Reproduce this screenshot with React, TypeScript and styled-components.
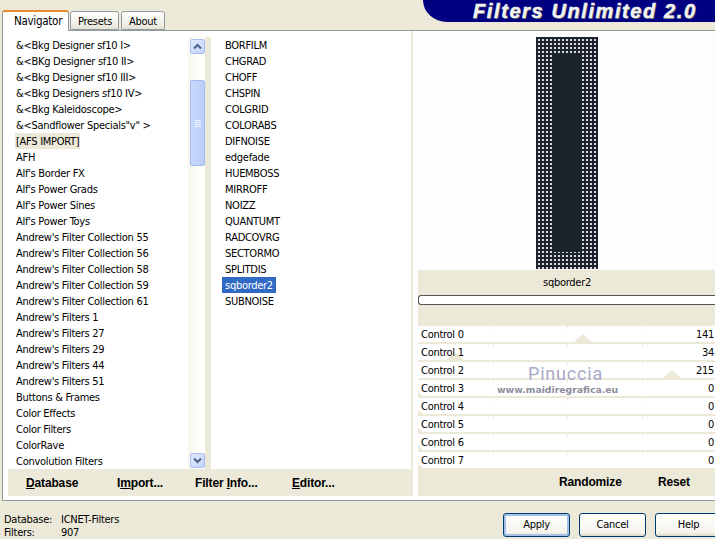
import styled, { createGlobalStyle } from 'styled-components'

const navigatorItems = [
    '&<Bkg Designer sf10 I>', '&<BKg Designer sf10 II>', '&<Bkg Designer sf10 III>', '&<Bkg Designers sf10 IV>',
    '&<Bkg Kaleidoscope>', '&<Sandflower Specials"v" >', '[AFS IMPORT]', 'AFH', "Alf's Border FX", "Alf's Power Grads",
    "Alf's Power Sines", "Alf's Power Toys", "Andrew's Filter Collection 55", "Andrew's Filter Collection 56",
    "Andrew's Filter Collection 58", "Andrew's Filter Collection 59", "Andrew's Filter Collection 61", "Andrew's Filters 1",
    "Andrew's Filters 27", "Andrew's Filters 29", "Andrew's Filters 44", "Andrew's Filters 51", 'Buttons & Frames',
    'Color Effects', 'Color Filters', 'ColorRave', 'Convolution Filters',
]

const filterItems = [
    'BORFILM', 'CHGRAD', 'CHOFF', 'CHSPIN', 'COLGRID', 'COLORABS', 'DIFNOISE', 'edgefade', 'HUEMBOSS', 'MIRROFF',
    'NOIZZ', 'QUANTUMT', 'RADCOVRG', 'SECTORMO', 'SPLITDIS', 'sqborder2', 'SUBNOISE',
]

const controlValues = [141, 34, 215, 0, 0, 0, 0, 0]

const GlobalStyle = createGlobalStyle`
    html, body {
        margin: 0;
        padding: 0;
        background: #ece9d8;
    }
    * {
        box-sizing: border-box;
    }
`

const Window = styled.div`
    width: 715px;
    height: 539px;
    overflow: hidden;
    display: flex;
    flex-direction: column;
    background: #ece9d8;
    color: #000;
    font-family: "DejaVu Sans Condensed", Roboto, sans-serif;
    font-size: 11px;
    letter-spacing: -0.28px;
`

const TopRow = styled.div`
    height: 30px;
    display: flex;
    justify-content: space-between;
    align-items: flex-start;
    padding-left: 2px;
`

const Tabs = styled.div`
    height: 31px;
    display: flex;
    align-items: flex-end;
    position: relative;
    z-index: 1;
`

const Tab = styled.div<{ $active?: boolean; $width: number }>`
    width: ${p => p.$width}px;
    height: ${p => (p.$active ? 21 : 19)}px;
    margin-right: ${p => (p.$active ? 1 : 2)}px;
    margin-bottom: ${p => (p.$active ? 0 : 1)}px;
    padding-left: ${p => (p.$active ? 11 : 7)}px;
    line-height: ${p => (p.$active ? 18 : 20)}px;
    font-size: ${p => (p.$active ? 11.5 : 11)}px;
    border: 1px solid #919b9c;
    border-bottom: ${p => (p.$active ? 'none' : '1px solid #919b9c')};
    border-top: ${p => (p.$active ? '2px solid #e68b2c' : '1px solid #919b9c')};
    border-radius: 3px 3px 0 0;
    background: ${p => (p.$active ? '#fff' : 'linear-gradient(#fff, #f0efe6 70%, #e6e3d4)')};
`

const Logo = styled.div`
    width: 292px;
    height: 22px;
    padding-left: 50px;
    background: #000080;
    border-bottom-left-radius: 24px 22px;
    color: #f2f2f2;
    font-family: "Liberation Sans", Arial, sans-serif;
    font-size: 20px;
    line-height: 22px;
    font-weight: 700;
    font-style: italic;
    letter-spacing: 1.6px;
    white-space: nowrap;
    -webkit-text-stroke: 0.5px #f2f2f2;
    text-shadow: 1px 1px 0 #555;
`

const Panel = styled.div`
    height: 471px;
    margin-left: 2px;
    margin-right: -2px;
    padding: 0 0 4px 5px;
    display: flex;
    gap: 5px;
    background: #fff;
    border: 1px solid #919b9c;
`

const LeftPane = styled.div`
    width: 405px;
    display: flex;
    flex-direction: column;
`

const Lists = styled.div`
    flex: 1;
    display: flex;
    padding-top: 6px;
    border-right: 2px solid #ece9d8;
`

const List = styled.div<{ $width: number; $indent: number }>`
    width: ${p => p.$width}px;
    padding-left: ${p => p.$indent}px;
    overflow: hidden;
`

const Item = styled.div<{ $state?: 'current' | 'selected' }>`
    width: ${p => (p.$state ? 'fit-content' : 'auto')};
    height: 16px;
    padding: 0 ${p => (p.$state === 'selected' ? 3 : 1)}px;
    margin-left: ${p => (p.$state === 'selected' ? 0 : 2)}px;
    line-height: 17px;
    white-space: nowrap;
    background: ${p => (p.$state === 'current' ? '#ece9d8' : p.$state === 'selected' ? '#316ac5' : 'transparent')};
    color: ${p => (p.$state === 'selected' ? '#fff' : '#000')};
`

const Scrollbar = styled.div`
    width: 17px;
    padding: 2px 0 1px 2px;
    display: flex;
    flex-direction: column;
    align-items: stretch;
    background: linear-gradient(90deg, #f6f5ee, #fdfdfb 60%, #fff);
`

const ScrollButton = styled.div`
    height: 15px;
    display: flex;
    align-items: center;
    justify-content: center;
    background: linear-gradient(135deg, #e1eafe, #c3d3fd);
    border: 1px solid #a9bdf0;
    border-radius: 2px;
`

const ScrollThumb = styled.div`
    height: 86px;
    margin-top: 26px;
    margin-bottom: auto;
    display: flex;
    flex-direction: column;
    align-items: center;
    justify-content: center;
    gap: 1px;
    background: linear-gradient(90deg, #c9d8fc, #bccffb);
    border: 1px solid #a3b9ee;
    border-radius: 2px;
`

const Grip = styled.span`
    width: 6px;
    height: 1px;
    background: #eef3fe;
`

const Divider = styled.div`
    width: 6px;
    margin: 0 1px 0 0;
    background: #ece9d8;
`

const ActionBar = styled.div<{ $indent: number }>`
    height: 28px;
    display: flex;
    align-items: center;
    padding-left: ${p => p.$indent}px;
    background: #ece9d8;
    font-family: "Liberation Sans", Arial, sans-serif;
    font-size: 12px;
    font-weight: 700;
    letter-spacing: -0.15px;
`

const Action = styled.div<{ $width: number }>`
    width: ${p => p.$width}px;
    white-space: nowrap;

    u {
        text-decoration: underline;
    }
`

const RightPane = styled.div`
    flex: 1;
    display: flex;
    flex-direction: column;
    min-width: 0;
`

const Preview = styled.div`
    height: 239px;
    padding: 6px 0 1px;
    display: flex;
    justify-content: center;
    background: #fdfdff;
`

const PreviewFrame = styled.div`
    width: 62px;
    padding: 16px 17px 17px;
    background-color: #d9dbe0;
    background-image: linear-gradient(#1c232d 50%, transparent 50%), linear-gradient(90deg, #1c232d 50%, transparent 50%);
    background-size: 4px 4px;
`

const PreviewCore = styled.div`
    height: 100%;
    background: #1a222c;
`

const Caption = styled.div`
    height: 25px;
    text-align: center;
    line-height: 25px;
    background: #ece9d8;
`

const Progress = styled.div`
    height: 10px;
    background: #fff;
    border: 1px solid #555;
    border-right: none;
    border-radius: 3px 0 0 3px;
`

const ProgressGap = styled.div`
    height: 21px;
    background: #ece9d8;
`

const Controls = styled.div`
    position: relative;
    display: flex;
    flex-direction: column;
    gap: 2px;
    background: #ece9d8;
`

const ControlRow = styled.div`
    position: relative;
    height: 16px;
    overflow: hidden;
    padding: 0 2px 0 3px;
    display: flex;
    justify-content: space-between;
    line-height: 17px;
    background:
        linear-gradient(#ecebe2, #ecebe2) 75px 0 / 1px 3px no-repeat,
        linear-gradient(#ecebe2, #ecebe2) 149px 0 / 1px 3px no-repeat,
        linear-gradient(#ecebe2, #ecebe2) 224px 0 / 1px 3px no-repeat,
        #fff;
`

const ControlText = styled.span`
    position: relative;
`

const Thumb = styled.span`
    position: absolute;
    bottom: 0;
    width: 0;
    height: 0;
    border-left: 9px solid transparent;
    border-right: 9px solid transparent;
    border-bottom: 8px solid #ece9d8;
`

const Watermark = styled.div`
    position: absolute;
    left: 79px;
    top: 39px;
    width: 121px;
    text-align: center;
    pointer-events: none;
    color: #8d8d9b;
`

const WatermarkName = styled.div`
    padding-left: 16px;
    font-family: Roboto, sans-serif;
    font-size: 18px;
    line-height: 18px;
    letter-spacing: 0.8px;
    color: #a9a9c9;
`

const WatermarkUrl = styled.div`
    margin-top: 2px;
    font-family: "DejaVu Sans", sans-serif;
    font-size: 9.3px;
    font-weight: 700;
    line-height: 10px;
    letter-spacing: 0;
    white-space: nowrap;
`

const Footer = styled.div`
    flex: 1;
    display: flex;
    justify-content: space-between;
    align-items: flex-start;
`

const Status = styled.div`
    display: grid;
    grid-template-columns: 57px auto;
    grid-auto-rows: 13px;
    padding: 12px 0 0 4px;
    line-height: 13px;
`

const FooterButtons = styled.div`
    display: flex;
    gap: 9px;
    padding-top: 12px;
    margin-right: -7px;
`

const DialogButton = styled.div<{ $default?: boolean }>`
    width: 67px;
    height: 24px;
    text-align: center;
    line-height: 22px;
    border: 1px solid #003c74;
    border-radius: 3px;
    background: linear-gradient(#fff, #f4f3ec 85%, #dcd8c8);
    box-shadow: ${p => (p.$default ? 'inset 0 0 0 2px #a5bfe8' : 'none')};
`

const Chevron = ({ up }: { up?: boolean }) => (
    <svg width="9" height="7" viewBox="0 0 9 7">
        <path
            d={up ? 'M1 5.5 L4.5 2 L8 5.5' : 'M1 1.5 L4.5 5 L8 1.5'}
            fill="none"
            stroke="#4d6185"
            strokeWidth="2"
        />
    </svg>
)

export default function App() {
    return (
        <Window>
            <GlobalStyle />
            <TopRow>
                <Tabs>
                    <Tab $active $width={67}>Navigator</Tab>
                    <Tab $width={49}>Presets</Tab>
                    <Tab $width={44}>About</Tab>
                </Tabs>
                <Logo>Filters Unlimited 2.0</Logo>
            </TopRow>
            <Panel>
                <LeftPane>
                    <Lists>
                        <List $width={180} $indent={5}>
                            {navigatorItems.map(name => (
                                <Item key={name} $state={name === '[AFS IMPORT]' ? 'current' : undefined}>{name}</Item>
                            ))}
                        </List>
                        <Scrollbar>
                            <ScrollButton><Chevron up /></ScrollButton>
                            <ScrollThumb>
                                <Grip /><Grip /><Grip /><Grip />
                            </ScrollThumb>
                            <ScrollButton><Chevron /></ScrollButton>
                        </Scrollbar>
                        <Divider />
                        <List $width={195} $indent={10}>
                            {filterItems.map(name => (
                                <Item key={name} $state={name === 'sqborder2' ? 'selected' : undefined}>
                                    {name}
                                </Item>
                            ))}
                        </List>
                    </Lists>
                    <ActionBar $indent={18}>
                        <Action $width={91}><u>D</u>atabase</Action>
                        <Action $width={78}>I<u>m</u>port...</Action>
                        <Action $width={97}>Filter <u>I</u>nfo...</Action>
                        <Action $width={80}><u>E</u>ditor...</Action>
                    </ActionBar>
                </LeftPane>
                <RightPane>
                    <Preview>
                        <PreviewFrame>
                            <PreviewCore />
                        </PreviewFrame>
                    </Preview>
                    <Caption>sqborder2</Caption>
                    <Progress />
                    <ProgressGap />
                    <Controls>
                        {controlValues.map((value, i) => (
                            <ControlRow key={i}>
                                <Thumb style={{ left: value * 1.2 - 13 }} />
                                <ControlText>Control {i}</ControlText>
                                <ControlText>{value}</ControlText>
                            </ControlRow>
                        ))}
                        <Watermark>
                            <WatermarkName>Pinuccia</WatermarkName>
                            <WatermarkUrl>www.maidiregrafica.eu</WatermarkUrl>
                        </Watermark>
                    </Controls>
                    <ActionBar $indent={141}>
                        <Action $width={99}>Randomize</Action>
                        <Action $width={50}>Reset</Action>
                    </ActionBar>
                </RightPane>
            </Panel>
            <Footer>
                <Status>
                    <span>Database:</span>
                    <span>ICNET-Filters</span>
                    <span>Filters:</span>
                    <span>907</span>
                </Status>
                <FooterButtons>
                    <DialogButton $default>Apply</DialogButton>
                    <DialogButton>Cancel</DialogButton>
                    <DialogButton>Help</DialogButton>
                </FooterButtons>
            </Footer>
        </Window>
    )
}
